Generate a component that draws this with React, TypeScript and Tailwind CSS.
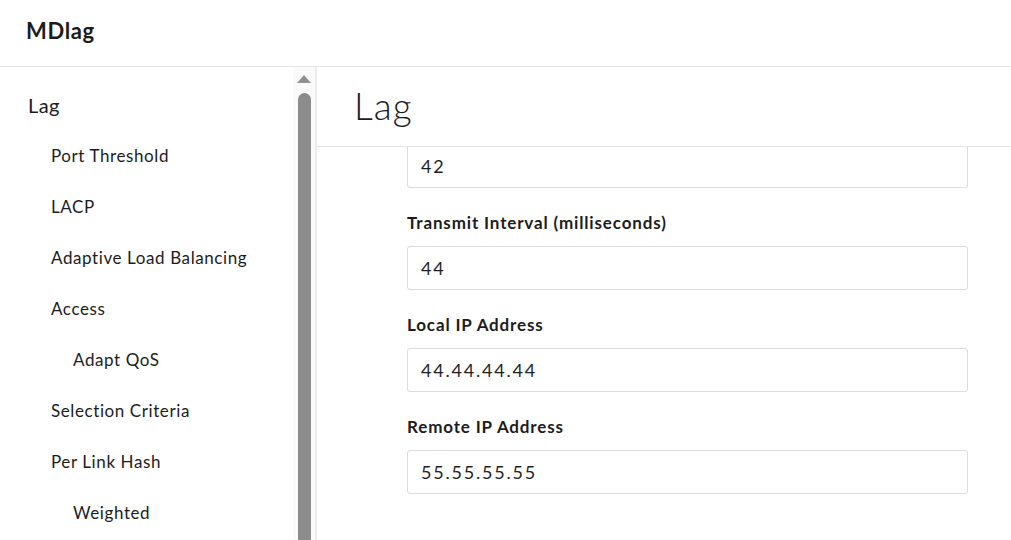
const navItems = [
  { label: "Port Threshold", level: 1 },
  { label: "LACP", level: 1 },
  { label: "Adaptive Load Balancing", level: 1 },
  { label: "Access", level: 1 },
  { label: "Adapt QoS", level: 2 },
  { label: "Selection Criteria", level: 1 },
  { label: "Per Link Hash", level: 1 },
  { label: "Weighted", level: 2 },
];

const fields = [
  { label: "Transmit Interval (milliseconds)", value: "44" },
  { label: "Local IP Address", value: "44.44.44.44" },
  { label: "Remote IP Address", value: "55.55.55.55" },
];

const TextBox = ({ value, cut }: { value: string; cut?: boolean }) => (
  <div
    className={`flex items-center pl-[13px] text-[18px] tracking-[0.1em] text-[#1f1f1f] bg-white border border-[#dcdcdc] ${
      cut ? "h-[41px] border-t-0 rounded-b-[3px]" : "h-[44px] rounded-[3px]"
    }`}
  >
    <span className={cut ? "-mt-[2px]" : ""}>{value}</span>
  </div>
);

export default function App() {
  return (
    <div className="h-[540px] w-[1011px] overflow-hidden bg-white flex flex-col font-['Lato',sans-serif] text-[#1c1c1c]">
      {/* header */}
      <div className="h-[67px] shrink-0 flex items-center pl-[26px] border-b border-[#e6e6e6]">
        <span className="text-[22px] tracking-[0.03em] font-bold -mt-[6px]">MDlag</span>
      </div>

      <div className="flex flex-1 min-h-0">
        {/* sidebar */}
        <div className="w-[317px] shrink-0 flex border-r-2 border-[#ececec]">
          <div className="flex-1 pt-[13px]">
            <div className="h-[50px] flex items-center pl-[28px] text-[20px] tracking-[0.02em]">Lag</div>
            {navItems.map((item) => (
              <div
                key={item.label}
                className={`h-[51px] flex items-center text-[17px] tracking-[0.035em] ${
                  item.level === 2 ? "pl-[73px]" : "pl-[51px]"
                }`}
              >
                {item.label}
              </div>
            ))}
          </div>
          <div className="w-[22px] bg-[#fafafa] flex flex-col items-center">
            <div className="mt-[8px] w-0 h-0 border-l-[7px] border-r-[7px] border-b-[8px] border-l-transparent border-r-transparent border-b-[#8f8f8f]" />
            <div className="mt-[10px] w-[13px] flex-1 bg-[#8c8c8c] rounded-t-full" />
          </div>
        </div>

        {/* main */}
        <div className="flex-1 flex flex-col min-w-0">
          <div className="h-[80px] shrink-0 flex items-center pl-[37px] border-b border-[#e3e3e3]">
            <span className="text-[37px] tracking-[0.03em] font-light -mt-[2px]">Lag</span>
          </div>
          <div className="flex-1 overflow-hidden pl-[90px] pr-[43px]">
            <TextBox value="42" cut />
            {fields.map((f) => (
              <div key={f.label}>
                <div className="mt-[25px] mb-[13px] h-[20px] flex items-center text-[17px] tracking-[0.05em] font-bold">
                  {f.label}
                </div>
                <TextBox value={f.value} />
              </div>
            ))}
          </div>
        </div>
      </div>
    </div>
  );
}
